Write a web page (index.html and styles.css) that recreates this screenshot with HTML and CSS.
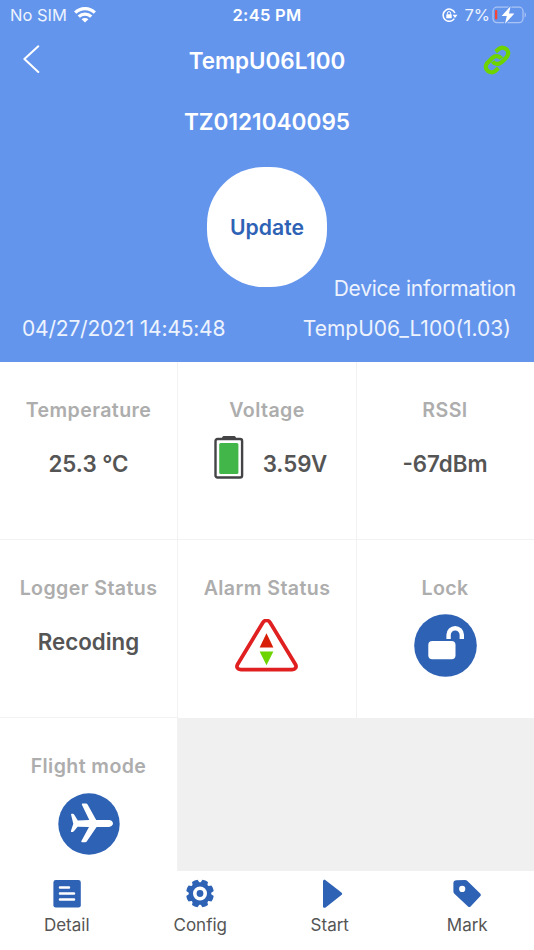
FILE: index.html
```html
<!DOCTYPE html>
<html lang="en">
  <head>
    <meta charset="UTF-8" />
    <meta name="viewport" content="width=device-width, initial-scale=1.0" />
    <title>TempU06L100</title>

    <link rel="stylesheet" href="styles.css">
  </head>

  <body>
    <main class="app">
      <header class="hero">
        <div class="status-bar">
          <div class="carrier">
            <span>No SIM</span>
            <svg class="wifi" viewBox="0 0 22 16" fill="none" stroke="#fff" stroke-width="3.2">
              <path d="M1.2 5.6a14 14 0 0 1 19.6 0" />
              <path d="M4.8 9.6a8.9 8.9 0 0 1 12.4 0" />
              <path d="M11 15.6 7.6 12.3a4.8 4.8 0 0 1 6.8 0z" fill="#fff" stroke="none" />
            </svg>
          </div>
          <span class="clock">2:45 PM</span>
          <div class="power">
            <svg class="rotation" viewBox="0 0 16 14">
              <path d="M12.9 5a6.1 6.1 0 1 0-.6 5.6" fill="none" stroke="#fff" stroke-width="1.5" />
              <path d="M10.6 6.7h4.9L13 9.9z" fill="#fff" />
              <rect x="4.3" y="6.3" width="5.4" height="4" rx=".6" fill="#fff" />
              <path d="M5.4 6.5V5.2a1.6 1.6 0 0 1 3.2 0v1.3" fill="none" stroke="#fff" />
            </svg>
            <span class="percent">7%</span>
            <svg class="charge" viewBox="0 0 35 18">
              <rect x="1" y="1.2" width="30" height="15.4" rx="4" fill="none" stroke="#a9c3f4" stroke-width="1.3" />
              <path d="M32.6 6.2c1.8.8 1.8 4.6 0 5.4z" fill="#a9c3f4" />
              <rect x="3" y="4" width="2.3" height="9.4" rx=".8" fill="#f5463c" />
              <path d="M18.6.2 9.6 9.9h5.2l-1.8 7.9L22.4 7.6h-5.4z" fill="#fff" stroke="#6495ed" stroke-width="2" paint-order="stroke" />
            </svg>
          </div>
        </div>

        <nav class="title-bar">
          <svg class="back" viewBox="0 0 17 28">
            <path d="M15.3 1.3 1.4 14l13.9 13" fill="none" stroke="#fff" stroke-width="2" stroke-linecap="round" stroke-linejoin="round" />
          </svg>
          <h1>TempU06L100</h1>
          <svg class="link" viewBox="0 0 30 30" fill="none" stroke="#6dd400" stroke-width="4.2">
            <path d="M13.6 6.6 17 3.9c4.6-3.7 12.1 2 8.1 7.5q-.8 1.1-5.6 5.9c-2.7 2.4-6.6 2.2-8.9-.9" />
            <path d="M16.4 23.2 13 26.1c-4.6 3.7-12.1-2-8.1-7.5q.8-1.1 5.6-5.9c2.7-2.4 6.6-2.2 8.9.9" />
          </svg>
        </nav>

        <h2 class="serial">TZ0121040095</h2>
        <button class="update">Update</button>
        <span class="info-label">Device information</span>
        <div class="info">
          <span class="date">04/27/2021 14:45:48</span>
          <span class="version">TempU06_L100(1.03)</span>
        </div>
      </header>

      <section class="cards">
        <article class="card">
          <h3>Temperature</h3>
          <span class="value">25.3 °C</span>
        </article>
        <article class="card">
          <h3>Voltage</h3>
          <div class="value voltage">
            <svg class="battery" viewBox="0 0 30 44">
              <path d="M8 3.5C8 1.6 9 1 10.5 1h9C21 1 22 1.6 22 3.5z" fill="#444447" />
              <rect x="1.5" y="4" width="26.6" height="38.5" rx="2" fill="#fff" stroke="#444447" stroke-width="2.4" />
              <rect x="5.2" y="8" width="19.2" height="31" rx="1.5" fill="#43b649" />
            </svg>
            <span>3.59V</span>
          </div>
        </article>
        <article class="card">
          <h3>RSSI</h3>
          <span class="value">-67dBm</span>
        </article>
        <article class="card">
          <h3>Logger Status</h3>
          <span class="value">Recoding</span>
        </article>
        <article class="card">
          <h3>Alarm Status</h3>
          <svg class="alarm" viewBox="0 0 64 54">
            <path d="M28.2 3.8 2.6 46.1c-1.8 3 .1 5.4 3.2 5.4h52.4c3.1 0 5-2.4 3.2-5.4L35.8 3.8c-1.9-3.1-5.7-3.1-7.6 0z" fill="none" stroke="#e02020" stroke-width="3.8" />
            <path d="M32 14.5 39 29H25z" fill="#d81e06" />
            <path d="M32 47.2 25 33h14z" fill="#6dd400" />
          </svg>
        </article>
        <article class="card">
          <h3>Lock</h3>
          <svg class="lock" viewBox="0 0 63 63">
            <circle cx="31.5" cy="31.5" r="31.3" fill="#2e62b5" />
            <rect x="14.3" y="27" width="27.2" height="18.3" rx="4" fill="#fff" />
            <path d="M34.6 25v-4.2a6.5 6.5 0 0 1 13.2 0V25" fill="none" stroke="#fff" stroke-width="4.4" />
          </svg>
        </article>
        <article class="card">
          <h3>Flight mode</h3>
          <svg class="plane" viewBox="0 0 62 62">
            <circle cx="31" cy="31" r="30.7" fill="#2e62b5" />
            <path d="M13.7 20.8h1.2q.8 0 1.2.6l3.7 6.2 11.5-.5-7.4-15.3q-.4-1.3.8-1.3h3.4q1 0 1.5 1l8.6 15.6H51c2.2 0 4 1.7 4 3.4s-1.8 3.4-4 3.4H38.6l-9.9 14.5q-.5.8-1.5.8h-3q-1.3 0-.8-1.3L31 33.9l-11.4-.2-3.5 4.4q-.6.8-1.4.8h-1.2q-.8 0-.6-.9l2.4-7.3-2.2-9q-.2-.9.6-.9z" fill="#fff" />
          </svg>
        </article>
      </section>

      <footer class="tabs">
        <a class="tab">
          <svg viewBox="0 0 28 30">
            <rect x=".4" y="1" width="27.4" height="27.6" rx="2.4" fill="#2e62b5" />
            <path d="M7 8.5h9M7 14.4h14M7 20.4h14" stroke="#fff" stroke-width="2.5" stroke-linecap="round" />
          </svg>
          <span>Detail</span>
        </a>
        <a class="tab">
          <svg viewBox="0 0 28 30">
            <g fill="#2e62b5">
              <circle cx="14" cy="14.5" r="11.2" />
              <g id="teeth">
                <path id="tooth" d="M10.2 5 11 .9q3-.9 6 0l.8 4.1zM10.2 24l.8 4.1q3 .9 6 0l.8-4.1z" transform="rotate(22.5 14 14.5)" />
                <use href="#tooth" transform="rotate(45 14 14.5)" />
              </g>
              <use href="#teeth" transform="rotate(90 14 14.5)" />
            </g>
            <circle cx="14" cy="14.5" r="5.2" fill="none" stroke="#fff" stroke-width="3.6" />
          </svg>
          <span>Config</span>
        </a>
        <a class="tab start">
          <svg viewBox="0 0 28 30">
            <path d="M3 2.2C3 .8 4.6.3 5.6 1.2l15.8 12.2c1 .8 1 1.8 0 2.6L5.6 28.4c-1 .9-2.6.4-2.6-1z" fill="#2e62b5" />
          </svg>
          <span>Start</span>
        </a>
        <a class="tab">
          <svg viewBox="0 0 28 30">
            <path d="M.4 4Q.6 1.2 3.4 1.2L12 1q1.4 0 2.4 1L27.2 14.6q1.3 1.3 0 2.6L17.6 27.4q-1.3 1.2-2.6 0L1.4 14.8q-1-1-1-2.4z" fill="#2e62b5" />
            <circle cx="9.2" cy="9.9" r="3.1" fill="#fff" />
          </svg>
          <span>Mark</span>
        </a>
      </footer>
    </main>
  </body>
</html>
```
FILE: styles.css
```css
*,
*::before,
*::after {
  box-sizing: border-box;
}

body {
  font-family: Inter, Roboto, sans-serif;
  background: #f0f0f0;
  color: #555;
  margin: 0;
}

h1,
h2,
h3 {
  margin: 0;
  font-weight: 600;
}

.app {
  display: flex;
  flex-direction: column;
  width: 534px;
  height: 950px;
  overflow: hidden;
  white-space: nowrap;
}

.hero {
  background: #6495ed;
  color: #fff;
  display: flex;
  flex-direction: column;
  height: 362px;
}

.status-bar {
  display: grid;
  grid-template-columns: 1fr auto 1fr;
  align-items: center;
  height: 30px;
  padding: 0 8px 0 10px;
  font-size: 16.5px;

  .carrier {
    display: flex;
    align-items: center;
    gap: 7px;
    color: #edf3fd;
  }

  .wifi {
    width: 22px;
    height: 16px;
    margin-top: -1px;
  }

  .clock {
    font-weight: 600;
    letter-spacing: 0.3px;
    margin-right: 2px;
  }

  .power {
    display: flex;
    align-items: center;
    justify-content: flex-end;
    color: #edf3fd;
  }

  .rotation {
    width: 16px;
    height: 14px;
    margin-right: 6px;
  }

  .charge {
    width: 35px;
    height: 18px;
    margin-top: -1px;
    margin-left: 2px;
    margin-right: -1px;
  }
}

.title-bar {
  display: grid;
  grid-template-columns: 60px 1fr 60px;
  align-items: center;
  height: 60px;
  padding: 0 22px;

  h1 {
    font-size: 22.4px;
    text-align: center;
  }

  .back {
    width: 17px;
    height: 28px;
    margin: -2px 0 0 1px;
  }

  .link {
    width: 30px;
    height: 30px;
    justify-self: end;
  }
}

.serial {
  font-size: 22.6px;
  line-height: 30px;
  margin-top: 17px;
  text-align: center;
}

.update {
  align-self: center;
  width: 120px;
  height: 120px;
  margin-top: 30px;
  border: 0;
  border-radius: 57px;
  background: #fff;
  color: #2e62b5;
  font: 600 21.2px Inter, Roboto, sans-serif;
}

.info-label {
  align-self: flex-end;
  margin-top: -13px;
  margin-right: 18px;
  font-size: 21px;
  letter-spacing: -0.24px;
  line-height: 30px;
  color: #edf3fd;
}

.info {
  display: flex;
  justify-content: space-between;
  margin-top: 10px;
  padding: 0 23px 0 22px;
  font-size: 21px;
  line-height: 30px;
  color: #edf3fd;

  .date {
    letter-spacing: -0.2px;
  }
}

.cards {
  display: grid;
  grid-template-columns: 178px 179px 177px;
  grid-template-rows: 178px 178px 153px;
  height: 509px;
}

.card {
  display: flex;
  flex-direction: column;
  align-items: center;
  background: #fff;
  border-right: 1px solid #f2f2f2;
  border-bottom: 1px solid #f2f2f2;
  padding-top: 36px;

  &:nth-child(3n) {
    border-right: 0;
    padding-right: 1px;
  }

  &:nth-child(n + 5) {
    border-bottom: 0;
  }

  h3 {
    color: #adadad;
    font-size: 19.6px;
    letter-spacing: 0.4px;
    line-height: 24px;
  }

  .value {
    font-size: 22.3px;
    font-weight: 600;
    line-height: 30px;
    margin-top: 27px;
  }

  .voltage {
    display: flex;
    align-items: center;
    gap: 19px;
    height: 30px;
    padding-left: 7px;
  }

  .battery {
    width: 30px;
    height: 44px;
    margin-top: -14px;
  }

  .alarm {
    width: 63px;
    height: 53px;
    margin: 19px 1px 0 0;
  }

  .lock {
    width: 63px;
    height: 63px;
    margin-top: 14px;
  }

  .plane {
    width: 62px;
    height: 62px;
    margin-top: 15px;
  }
}

.tabs {
  display: grid;
  grid-template-columns: repeat(4, 1fr);
  background: #fff;
  height: 79px;
}

.tab {
  display: flex;
  flex-direction: column;
  align-items: center;
  padding-top: 8px;
  font-size: 17px;
  line-height: 22px;

  svg {
    width: 28px;
    height: 30px;
  }

  span {
    margin-top: 5px;
  }
}

.start span {
  padding-right: 8px;
}
```
